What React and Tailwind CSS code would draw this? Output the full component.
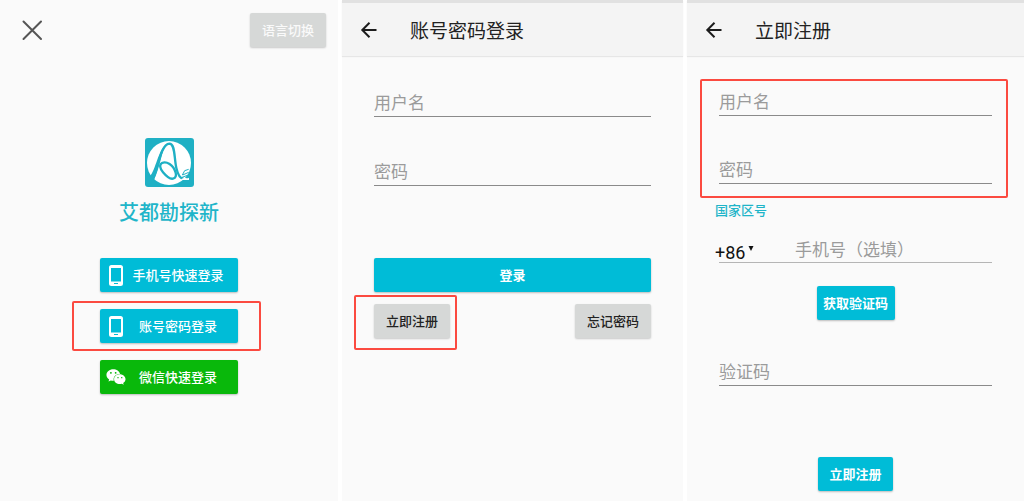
import { FaWeixin } from 'react-icons/fa';

const primary =
  'rounded-[2px] bg-[#00bcd7] text-[13px] leading-5 text-white shadow-[0_1px_2px_rgba(0,0,0,0.25)]';
const neutral =
  'h-[34px] w-[76px] rounded-[2px] bg-[#d6d8d7] text-[13px] leading-5 shadow-[0_1px_2px_rgba(0,0,0,0.2)]';

function Logo() {
  return (
    <svg viewBox="0 0 147 147" className="size-[49px]" role="img" aria-label="艾都勘探新">
      <rect width="147" height="147" rx="9" fill="#1fb0c4" />
      <circle cx="72" cy="75" r="66" fill="#fff" />
      <g fill="none" stroke="#1fb0c4" strokeLinejoin="round">
        <path d="M24 122 C38 96 47 18 73 17 C91 17 87 60 94 90 C99 111 106 123 116 121" strokeWidth="7" />
        <path d="M14 116 C32 96 40 36 62 20 C50 40 44 92 27 125 Z" fill="#1fb0c4" stroke="none" />
        <path d="M92 104 C85 80 64 69 51 75 C42 80 45 92 54 103 C64 115 76 124 84 122 C93 120 94 112 92 104 Z" strokeWidth="7" />
        <path d="M112 111 L119 98 L131 94 M113 111 L131 103 M111 118 L130 111" strokeWidth="3" />
      </g>
      <path d="M110 123 C118 117 124 123 132 119 V126 H110 Z" fill="#fff" />
    </svg>
  );
}

function PhoneIcon() {
  return (
    <svg viewBox="0 0 14 21" className="h-[21px] w-[14px]" aria-hidden="true">
      <path
        d="M2.5 0h9A2.5 2.5 0 0 1 14 2.5v16a2.5 2.5 0 0 1-2.5 2.5h-9A2.5 2.5 0 0 1 0 18.5v-16A2.5 2.5 0 0 1 2.5 0ZM2 3v13.5h10V3ZM5 18v1h4v-1Z"
        fill="#fff"
        fillRule="evenodd"
      />
    </svg>
  );
}

function Outline({ className }) {
  return <span aria-hidden="true" className={`pointer-events-none absolute rounded-[2px] border-2 border-[#fb4a40] ${className}`} />;
}

function TopBar({ title }) {
  return (
    <header className="flex h-14 items-center gap-7 border-t-[3px] border-[#e1e1e1] bg-[#f4f4f4] pl-4 shadow-[0_1px_1px_rgba(0,0,0,0.08)]">
      <button type="button" aria-label="返回">
        <svg viewBox="0 0 24 24" className="size-6" fill="none" stroke="#1c1c1c" strokeWidth="2">
          <path d="M18.500 12H4.500M11.500 4.800L4.300 12l7.200 7.200" />
        </svg>
      </button>
      <h2 className="text-[19px] leading-7 text-[#222]">{title}</h2>
    </header>
  );
}

function Field({ label, type = 'text' }) {
  return (
    <input
      type={type}
      aria-label={label}
      placeholder={label}
      className="block h-7 w-full border-b border-[#8a8a8a] bg-transparent pb-0.5 text-[17px] leading-6 text-[#222] outline-none placeholder:text-[#9b9b9b]"
    />
  );
}

function LoginChoice({ icon, label, className = '' }) {
  return (
    <button type="button" className={`flex h-[34px] w-full items-center pr-2 pl-1.5 ${primary} ${className}`}>
      <span className="flex w-5 justify-center">{icon}</span>
      <span className="flex-1 text-center font-medium">{label}</span>
    </button>
  );
}

function Welcome() {
  return (
    <section className="bg-[#fafafa]">
      <div className="flex items-center justify-between pt-[13px] pr-3 pl-5">
        <button type="button" aria-label="关闭">
          <svg viewBox="0 0 24 24" className="size-6" fill="none" stroke="#555" strokeWidth="2" strokeLinecap="round">
            <path d="M3.500 3.500l17.500 17.500M21 3.500L3.500 21" />
          </svg>
        </button>
        <button type="button" className={`font-medium text-[#fafafa] ${neutral}`}>
          语言切换
        </button>
      </div>
      <div className="mt-[91px] flex flex-col items-center">
        <Logo />
        <h1 className="mt-[11px] text-[20px] leading-7 font-medium text-[#1fb5c9]">艾都勘探新</h1>
        <div className="mt-8 flex w-[138px] flex-col gap-[17px]">
          <LoginChoice icon={<PhoneIcon />} label="手机号快速登录" />
          <div className="relative">
            <LoginChoice icon={<PhoneIcon />} label="账号密码登录" />
            <Outline className="-top-2 -right-[23px] -bottom-2 -left-7" />
          </div>
          <LoginChoice icon={<FaWeixin className="size-5" />} label="微信快速登录" className="bg-[#09b80b]!" />
        </div>
      </div>
    </section>
  );
}

function PasswordLogin() {
  return (
    <section className="bg-[#fafafa]">
      <TopBar title="账号密码登录" />
      <form className="px-8 pt-[33px]" onSubmit={(event) => event.preventDefault()}>
        <div className="flex flex-col gap-[41px]">
          <Field label="用户名" />
          <Field label="密码" type="password" />
        </div>
        <button type="submit" className={`mt-[72px] h-[34px] w-full font-bold ${primary}`}>
          登录
        </button>
        <div className="mt-3 flex justify-between">
          <div className="relative">
            <button type="button" className={`block font-medium text-[#222] ${neutral}`}>
              立即注册
            </button>
            <Outline className="-top-[9px] -right-[7px] -bottom-3 -left-5" />
          </div>
          <button type="button" className={`font-medium text-[#222] ${neutral}`}>
            忘记密码
          </button>
        </div>
      </form>
    </section>
  );
}

function Register() {
  return (
    <section className="bg-[#fafafa]">
      <TopBar title="立即注册" />
      <form className="px-8 pt-8" onSubmit={(event) => event.preventDefault()}>
        <div className="relative flex flex-col gap-10">
          <Field label="用户名" />
          <Field label="密码" type="password" />
          <Outline className="-top-[9px] -right-4 -bottom-[14px] -left-[19px]" />
        </div>
        <label htmlFor="country" className="mt-4 -ml-1 block text-[13px] leading-5 font-medium text-[#1fb5c9]">
          国家区号
        </label>
        <div className="mt-[15px] flex h-7 border-b border-[#b5b5b5]">
          <div className="-ml-1 flex w-20 items-center">
            <select id="country" defaultValue="+86" className="h-full appearance-none bg-transparent pt-1.5 font-[Roboto,sans-serif] text-[18px] leading-6 text-[#111] outline-none">
              <option>+86</option>
            </select>
            <svg viewBox="0 0 6 5" className="ml-0.5 h-[5px] w-1.5" aria-hidden="true">
              <path d="M0.500 0h5L3 5Z" fill="#111" />
            </svg>
          </div>
          <input
            type="tel"
            aria-label="手机号"
            placeholder="手机号（选填）"
            className="min-w-0 flex-1 bg-transparent text-[17px] leading-6 outline-none placeholder:text-[#9b9b9b]"
          />
        </div>
        <button type="button" className={`mx-auto mt-[23px] block h-[34px] w-[78px] font-bold ${primary}`}>
          获取验证码
        </button>
        <div className="mt-[38px]">
          <Field label="验证码" />
        </div>
        <button type="submit" className={`mx-auto mt-[71px] block h-[34px] w-[75px] font-bold ${primary}`}>
          立即注册
        </button>
      </form>
    </section>
  );
}

export default function App() {
  return (
    <main className="grid min-h-screen grid-cols-[338fr_341fr_337fr] gap-1 bg-white font-['Noto_Sans_CJK_SC',sans-serif]">
      <Welcome />
      <PasswordLogin />
      <Register />
    </main>
  );
}
